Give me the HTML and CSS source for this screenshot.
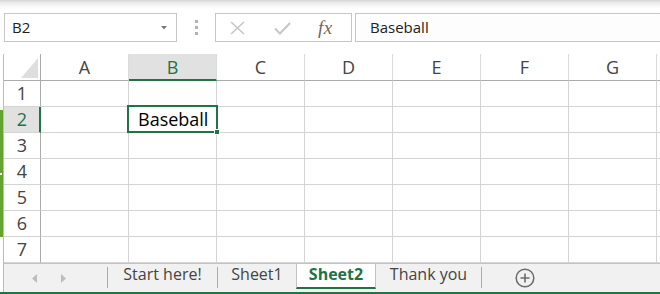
FILE: index.html
```html
<!DOCTYPE html>
<html>
<head>
<meta charset="utf-8">
<link rel="stylesheet" href="styles.css">
</head>
<body>
<div class="app">
  <div class="topshade"></div>
  <div class="fbar">
    <div class="namebox"><span class="ref">B2</span><svg class="caret" width="6" height="4" viewBox="0 0 6 4"><polygon points="0,0 6,0 3,3.5" fill="#7a7a7a"/></svg></div>
    <div class="grip"><i></i><i></i><i></i></div>
    <div class="fbtns">
      <svg class="ic-x" width="15" height="14" viewBox="0 0 15 14"><path d="M1 1 L14 13 M14 1 L1 13" stroke="#c6c6c6" stroke-width="1.6" fill="none"/></svg>
      <svg class="ic-ok" width="17" height="13" viewBox="0 0 17 13"><polyline points="1,6.5 6,11.5 16,1" stroke="#c6c6c6" stroke-width="2" fill="none"/></svg>
      <span class="ic-fx">fx</span>
    </div>
    <div class="finput">Baseball</div>
  </div>
  <div class="book">
    <div class="sheet">
      <div class="row hrow">
        <div class="corner"><svg width="17" height="20" viewBox="0 0 17 20"><polygon points="17,0 17,20 0,20" fill="#dedede"/></svg></div>
        <div class="ch">A</div><div class="ch sel">B</div><div class="ch">C</div><div class="ch">D</div><div class="ch">E</div><div class="ch">F</div><div class="ch">G</div><div class="ch"></div>
      </div>
      <div class="row"><div class="rh">1</div><div class="c"></div><div class="c"></div><div class="c"></div><div class="c"></div><div class="c"></div><div class="c"></div><div class="c"></div><div class="c"></div></div>
      <div class="row"><div class="rh sel">2</div><div class="c"></div><div class="c active"><span class="val">Baseball</span><span class="selbox"></span><span class="handle"></span></div><div class="c"></div><div class="c"></div><div class="c"></div><div class="c"></div><div class="c"></div><div class="c"></div></div>
      <div class="row"><div class="rh">3</div><div class="c"></div><div class="c"></div><div class="c"></div><div class="c"></div><div class="c"></div><div class="c"></div><div class="c"></div><div class="c"></div></div>
      <div class="row"><div class="rh">4</div><div class="c"></div><div class="c"></div><div class="c"></div><div class="c"></div><div class="c"></div><div class="c"></div><div class="c"></div><div class="c"></div></div>
      <div class="row"><div class="rh">5</div><div class="c"></div><div class="c"></div><div class="c"></div><div class="c"></div><div class="c"></div><div class="c"></div><div class="c"></div><div class="c"></div></div>
      <div class="row"><div class="rh">6</div><div class="c"></div><div class="c"></div><div class="c"></div><div class="c"></div><div class="c"></div><div class="c"></div><div class="c"></div><div class="c"></div></div>
      <div class="row"><div class="rh">7</div><div class="c"></div><div class="c"></div><div class="c"></div><div class="c"></div><div class="c"></div><div class="c"></div><div class="c"></div><div class="c"></div></div>
    </div>
    <div class="tabs">
      <div class="nav">
        <svg width="5" height="9" viewBox="0 0 5 9"><polygon points="5,0 5,9 0,4.5" fill="#bdbdbd"/></svg>
        <svg width="5" height="9" viewBox="0 0 5 9"><polygon points="0,0 0,9 5,4.5" fill="#bdbdbd"/></svg>
      </div>
      <div class="sep"></div>
      <div class="tab t1">Start here!</div>
      <div class="sep"></div>
      <div class="tab t2">Sheet1</div>
      <div class="tab t3 on">Sheet2</div>
      <div class="tab t4">Thank you</div>
      <div class="sep"></div>
      <div class="add"><svg width="20" height="20" viewBox="0 0 20 20"><circle cx="10" cy="10" r="8.8" stroke="#6b6b6b" stroke-width="1.5" fill="none"/><path d="M10 5.5 V14.5 M5.5 10 H14.5" stroke="#6b6b6b" stroke-width="1.6"/></svg></div>
    </div>
  </div>
  <div class="status"></div>
  <div class="strip"><span class="notch"></span></div>
</div>
</body>
</html>
```

FILE: styles.css
```css
* { box-sizing: border-box; }
html, body { margin: 0; padding: 0; background: #fff; }
body { width: 660px; height: 294px; overflow: hidden; font-family: "Open Sans", "Liberation Sans", sans-serif; }
.app { position: relative; width: 660px; height: 294px; overflow: hidden; background: #fff; }

.topshade { height: 13px; background: linear-gradient(#d6d6d6 0px, #ececec 3px, #fafafa 7px, #fff 10px); }

.fbar { display: flex; height: 29px; }
.namebox { margin-left: 4px; width: 173px; height: 29px; border: 1px solid #c6c6c6; display: flex; align-items: center; justify-content: space-between; padding: 0 9px 0 7px; }
.ref { font-size: 15px; line-height: 27px; color: #222; }
.caret { margin-top: 1px; }
.grip { width: 38px; display: flex; flex-direction: column; align-items: center; padding-top: 7px; gap: 3px; }
.grip i { display: block; width: 3px; height: 3px; background: #b3b3b3; }
.fbtns { width: 137px; height: 29px; border: 1px solid #c6c6c6; display: flex; align-items: center; padding-left: 14px; }
.ic-x { margin-top: 1px; }
.ic-ok { margin-left: 29px; margin-top: 1px; }
.ic-fx { margin-left: 27px; font-family: "Liberation Serif", serif; font-style: italic; font-size: 19px; color: #6a6a6a; line-height: 27px; letter-spacing: 0.5px; }
.finput { flex: 1; margin-left: 3px; height: 29px; border: 1px solid #c6c6c6; border-right: none; padding-left: 14px; font-size: 15px; line-height: 27px; color: #222; background: #fdfdfd; }

.book { margin-top: 12px; margin-left: 3px; border-left: 1px solid #bcbcbc; }
.sheet { height: 209px; overflow: hidden; }
.row { display: flex; height: 26px; }
.hrow { height: 27px; }
.corner { flex: none; width: 37px; border-right: 1px solid #ababab; border-bottom: 1px solid #ababab; display: flex; align-items: flex-end; justify-content: flex-end; padding: 0 2px 2px 0; }
.ch { flex: none; width: 88px; border-right: 1px solid #dadada; border-bottom: 1px solid #ababab; text-align: center; font-size: 18px; padding-top: 1px; line-height: 25px; color: #444; }
.ch.sel { background: #e1e1e1; color: #217346; border-bottom: 2px solid #217346; }
.rh { flex: none; width: 37px; border-right: 1px solid #ababab; border-bottom: 1px solid #d4d4d4; text-align: center; font-size: 18px; line-height: 24px; color: #444; }
.rh.sel { background: #e1e1e1; color: #217346; border-right: 2px solid #217346; padding-left: 1px; }
.c { flex: none; width: 88px; border-right: 1px solid #d4d4d4; border-bottom: 1px solid #d4d4d4; }
.c.active { position: relative; }
.val { display: block; padding-left: 9px; font-size: 18px; line-height: 24px; color: #000; white-space: nowrap; }
.selbox { position: absolute; left: -2px; top: -2px; width: 91px; height: 28px; border: 2px solid #217346; }
.handle { position: absolute; left: 85px; top: 22px; width: 6px; height: 6px; background: #217346; border: 1px solid #fff; }

.tabs { display: flex; align-items: flex-start; height: 29px; background: #f1f1f1; border-top: 1px solid #c3c3c3; }
.nav { width: 103px; height: 28px; display: flex; align-items: center; padding-left: 28px; gap: 24px; }
.sep { flex: none; width: 1px; height: 21px; margin-top: 3px; background: #ababab; }
.tab { flex: none; height: 25px; text-align: center; font-size: 16px; line-height: 20px; color: #444; }
.t1 { width: 109px; }
.t2 { width: 78px; }
.t3 { width: 80px; }
.t4 { width: 105px; }
.tab.on { background: #fff; color: #217346; font-weight: 700; border-left: 1px solid #c3c3c3; border-right: 1px solid #c3c3c3; border-bottom: 2px solid #217346; }
.add { margin-left: 33px; height: 28px; display: flex; align-items: center; }

.status { height: 2px; background: #217346; }
.strip { position: absolute; left: 0; top: 110px; width: 3px; height: 127px; background: #64a532; }
.notch { position: absolute; left: 0; top: 63px; width: 2px; height: 2px; background: #fff; }
```
